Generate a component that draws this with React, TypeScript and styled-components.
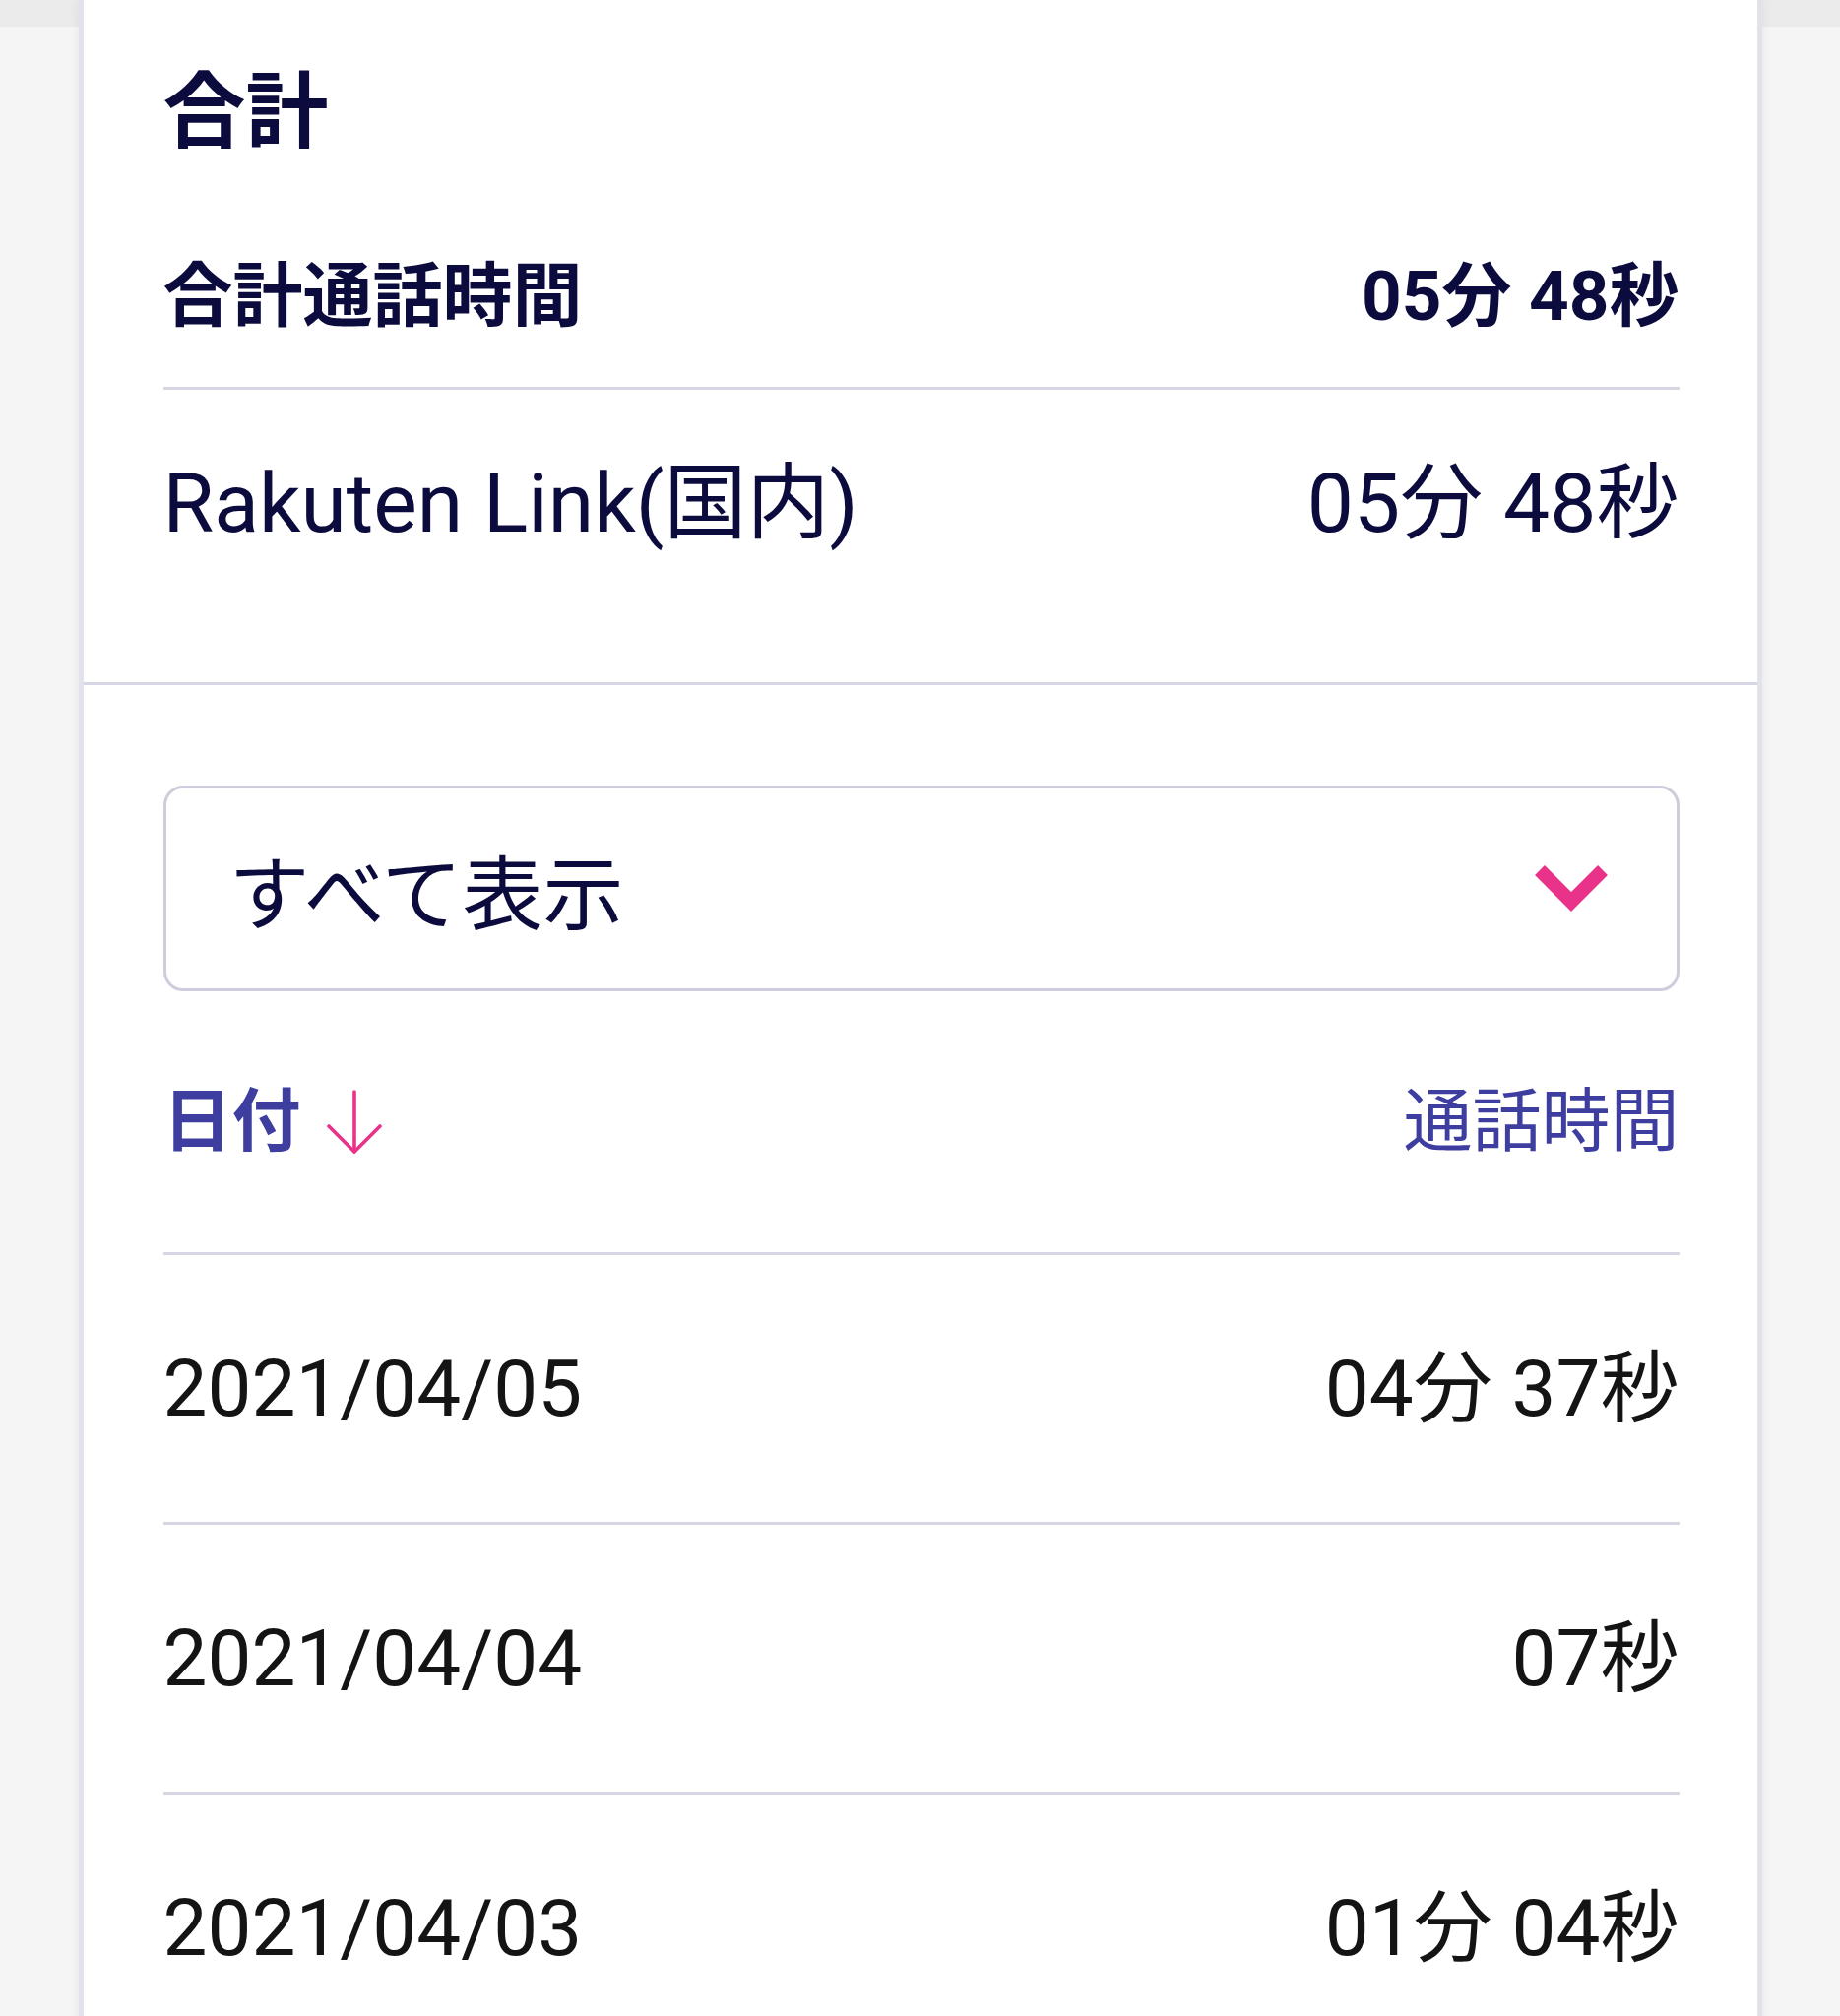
import React from "react";
import styled, { createGlobalStyle } from "styled-components";

const NAVY = "#0c0b3d";
const INDIGO = "#3d3e9f";
const PINK = "#e9338a";
const LINE = "#d6d6e4";

const GlobalStyle = createGlobalStyle`
  html, body {
    margin: 0;
    padding: 0;
  }
  body {
    background: #f5f5f5 linear-gradient(#ebebeb, #ebebeb) top / 100% 27px no-repeat;
    font-family: Roboto, "Noto Sans CJK JP", sans-serif;
    -webkit-font-smoothing: antialiased;
  }
`;

interface ICall {
  date: string;
  duration: string;
}

const calls: ICall[] = [
  { date: "2021/04/05", duration: "04分 37秒" },
  { date: "2021/04/04", duration: "07秒" },
  { date: "2021/04/03", duration: "01分 04秒" },
];

const ChevronDown = () => (
  <svg width="76" height="50" viewBox="0 0 76 50">
    <polyline
      points="6,6 38,38 70,6"
      fill="none"
      stroke={PINK}
      strokeWidth="14"
      strokeLinejoin="miter"
    />
  </svg>
);

const ArrowDown = () => (
  <svg width="56" height="66" viewBox="0 0 56 66">
    <g fill="none" stroke={PINK} strokeWidth="3.6" strokeLinecap="round" strokeLinejoin="round">
      <line x1="28" y1="2" x2="28" y2="63" />
      <polyline points="2,37 28,63 54,37" />
    </g>
  </svg>
);

export default function App() {
  return (
    <>
      <GlobalStyle />
      <Card>
        <Summary>
          <Heading>合計</Heading>
          <SummaryRow $strong>
            <span>合計通話時間</span>
            <span>05分 48秒</span>
          </SummaryRow>
          <SummaryRow>
            <span>Rakuten Link(国内)</span>
            <span>05分 48秒</span>
          </SummaryRow>
        </Summary>

        <History>
          <Select>
            <SelectText>すべて表示</SelectText>
            <ChevronDown />
          </Select>

          <SortHeader>
            <SortLabel $active>
              日付
              <ArrowDown />
            </SortLabel>
            <SortLabel>通話時間</SortLabel>
          </SortHeader>

          {calls.map((c) => (
            <CallRow key={c.date}>
              <span>{c.date}</span>
              <span>{c.duration}</span>
            </CallRow>
          ))}
        </History>
      </Card>
    </>
  );
}

const Card = styled.main`
  width: 1700px;
  min-height: 2100px;
  margin: 0 auto;
  background: #fff;
  border-left: 5px solid #e2e2ec;
  border-right: 5px solid #e2e2ec;
  box-shadow: 0 0 12px rgba(0, 0, 0, 0.06);
`;

const Summary = styled.section`
  padding: 73px 79px 69px 81px;
  border-bottom: 3px solid ${LINE};
  color: ${NAVY};
`;

const Heading = styled.h2`
  margin: 0 0 46px;
  font-size: 84px;
  font-weight: 700;
  line-height: 1;
`;

const SummaryRow = styled.div<{ $strong?: boolean }>`
  box-sizing: border-box;
  display: flex;
  justify-content: space-between;
  align-items: center;
  padding-top: 4px;
  line-height: 1;
  height: ${(p) => (p.$strong ? "193px" : "228px")};
  font-size: ${(p) => (p.$strong ? "71px" : "84px")};
  font-weight: ${(p) => (p.$strong ? 700 : 400)};
  border-bottom: ${(p) => (p.$strong ? `3px solid ${LINE}` : "none")};
`;

const History = styled.section`
  padding: 102px 79px 0 81px;
`;

const Select = styled.div`
  box-sizing: border-box;
  height: 209px;
  display: flex;
  justify-content: space-between;
  align-items: center;
  padding: 0 69px 0 64px;
  border: 3px solid #cdcddd;
  border-radius: 20px;
  color: ${NAVY};
`;

const SelectText = styled.span`
  padding-top: 14px;
  font-size: 82px;
  line-height: 1;
`;

const SortHeader = styled.div`
  height: 265px;
  display: flex;
  justify-content: space-between;
  align-items: center;
`;

const SortLabel = styled.span<{ $active?: boolean }>`
  display: inline-flex;
  align-items: center;
  gap: 26px;
  font-size: 70px;
  line-height: 1;
  color: ${INDIGO};
  font-weight: ${(p) => (p.$active ? 700 : 400)};
`;

const CallRow = styled.div`
  height: 271px;
  display: flex;
  justify-content: space-between;
  align-items: center;
  border-top: 3px solid ${LINE};
  font-size: 80px;
  line-height: 1;
  color: #141414;
`;
